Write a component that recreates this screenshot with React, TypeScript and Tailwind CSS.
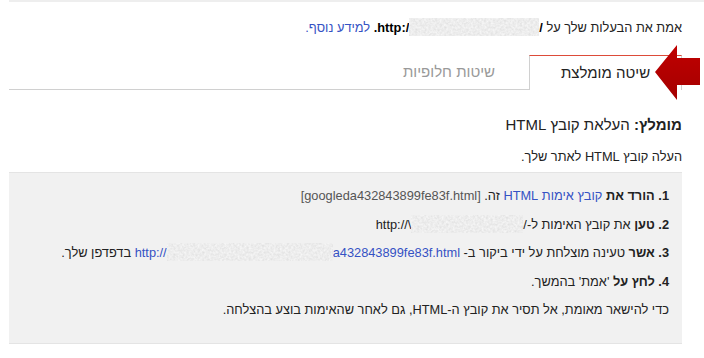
import { useId } from 'react';

function Blur({ w, h = 18 }: { w: number; h?: number }) {
  const id = useId().replace(/:/g, '');
  return (
    <svg width={w} height={h} className="inline-block align-[-4px]">
      <filter id={id}>
        <feTurbulence type="fractalNoise" baseFrequency="0.45" numOctaves={2} seed={3} />
        <feColorMatrix
          type="matrix"
          values="0 0 0 0.25 0.72  0 0 0 0.25 0.72  0 0 0 0.25 0.72  0 0 0 0 1"
        />
      </filter>
      <rect width={w} height={h} filter={`url(#${id})`} />
    </svg>
  );
}

const link = 'text-[#3552c4]';

export default function App() {
  return (
    <div
      dir="rtl"
      className="w-[704px] h-[358px] overflow-hidden bg-white text-[#222] font-['Liberation_Sans',Arial,sans-serif]"
    >
      <div className="ml-[9px] h-[2px] bg-[#eeeeee]" />
      <div className="pl-[9px] pr-[22px]">
        <p className="mt-[16px] text-[12.8px] leading-[16px]">
          אמת את הבעלות שלך על{' '}
          <bdi dir="ltr" className="font-bold text-black">
            http:/
            <Blur w={130} />/
          </bdi>
          <b className="text-black">.</b> <span className={link}>למידע נוסף.</span>
        </p>

        <div className="relative mt-[19px] flex h-[35px]">
          <div className="flex w-[153px] items-center justify-center border-x border-t border-x-[#d0d0d0] border-t-[#dd4b39] bg-white text-[15px] text-[#222]">
            שיטה מומלצת
          </div>
          <div className="flex w-[160px] items-center justify-center border-b border-[#d0d0d0] text-[15px] text-[#999]">
            שיטות חלופיות
          </div>
          <div className="flex-1 border-b border-[#d0d0d0]" />
          <svg
            width="48"
            height="58"
            viewBox="0 0 48 58"
            className="absolute right-[-20px] top-[-11px]"
          >
            <defs>
              <linearGradient id="arr" x1="0" y1="0" x2="0" y2="1">
                <stop offset="0" stopColor="#c00000" />
                <stop offset="1" stopColor="#a40000" />
              </linearGradient>
            </defs>
            <path d="M1 28 L23 1 L23 14 L46 14 L46 41 L23 41 L23 56 Z" fill="url(#arr)" />
          </svg>
        </div>

        <h2 className="mt-[25px] text-[15px] leading-[20px]">
          <b>מומלץ:</b> העלאת קובץ HTML
        </h2>
        <p className="mt-[14px] text-[12.8px] leading-[16px]">העלה קובץ HTML לאתר שלך.</p>

        <div className="mt-[7px] h-[172px] border-y border-[#e4e4e4] bg-[#f1f1f1] pr-[13px] pt-[9px] text-[12.8px] leading-[28.5px]">
          <div>
            <b>1. הורד את</b> <span className={link}>קובץ אימות HTML</span> זה.{' '}
            <span className="text-[#555]">[googleda432843899fe83f.html]</span>
          </div>
          <div>
            <b>2. טען</b> את קובץ האימות ל-
            <bdi dir="ltr">
              {'http://\\'}
              <Blur w={112} />/
            </bdi>
          </div>
          <div>
            <b>3. אשר</b> טעינה מוצלחת על ידי ביקור ב-{' '}
            <bdi dir="ltr" className={link}>
              http://
              <Blur w={166} />
              a432843899fe83f.html
            </bdi>{' '}
            בדפדפן שלך.
          </div>
          <div>
            <b>4. לחץ על</b> 'אמת' בהמשך.
          </div>
          <div>כדי להישאר מאומת, אל תסיר את קובץ ה-HTML, גם לאחר שהאימות בוצע בהצלחה.</div>
        </div>
      </div>
    </div>
  );
}
